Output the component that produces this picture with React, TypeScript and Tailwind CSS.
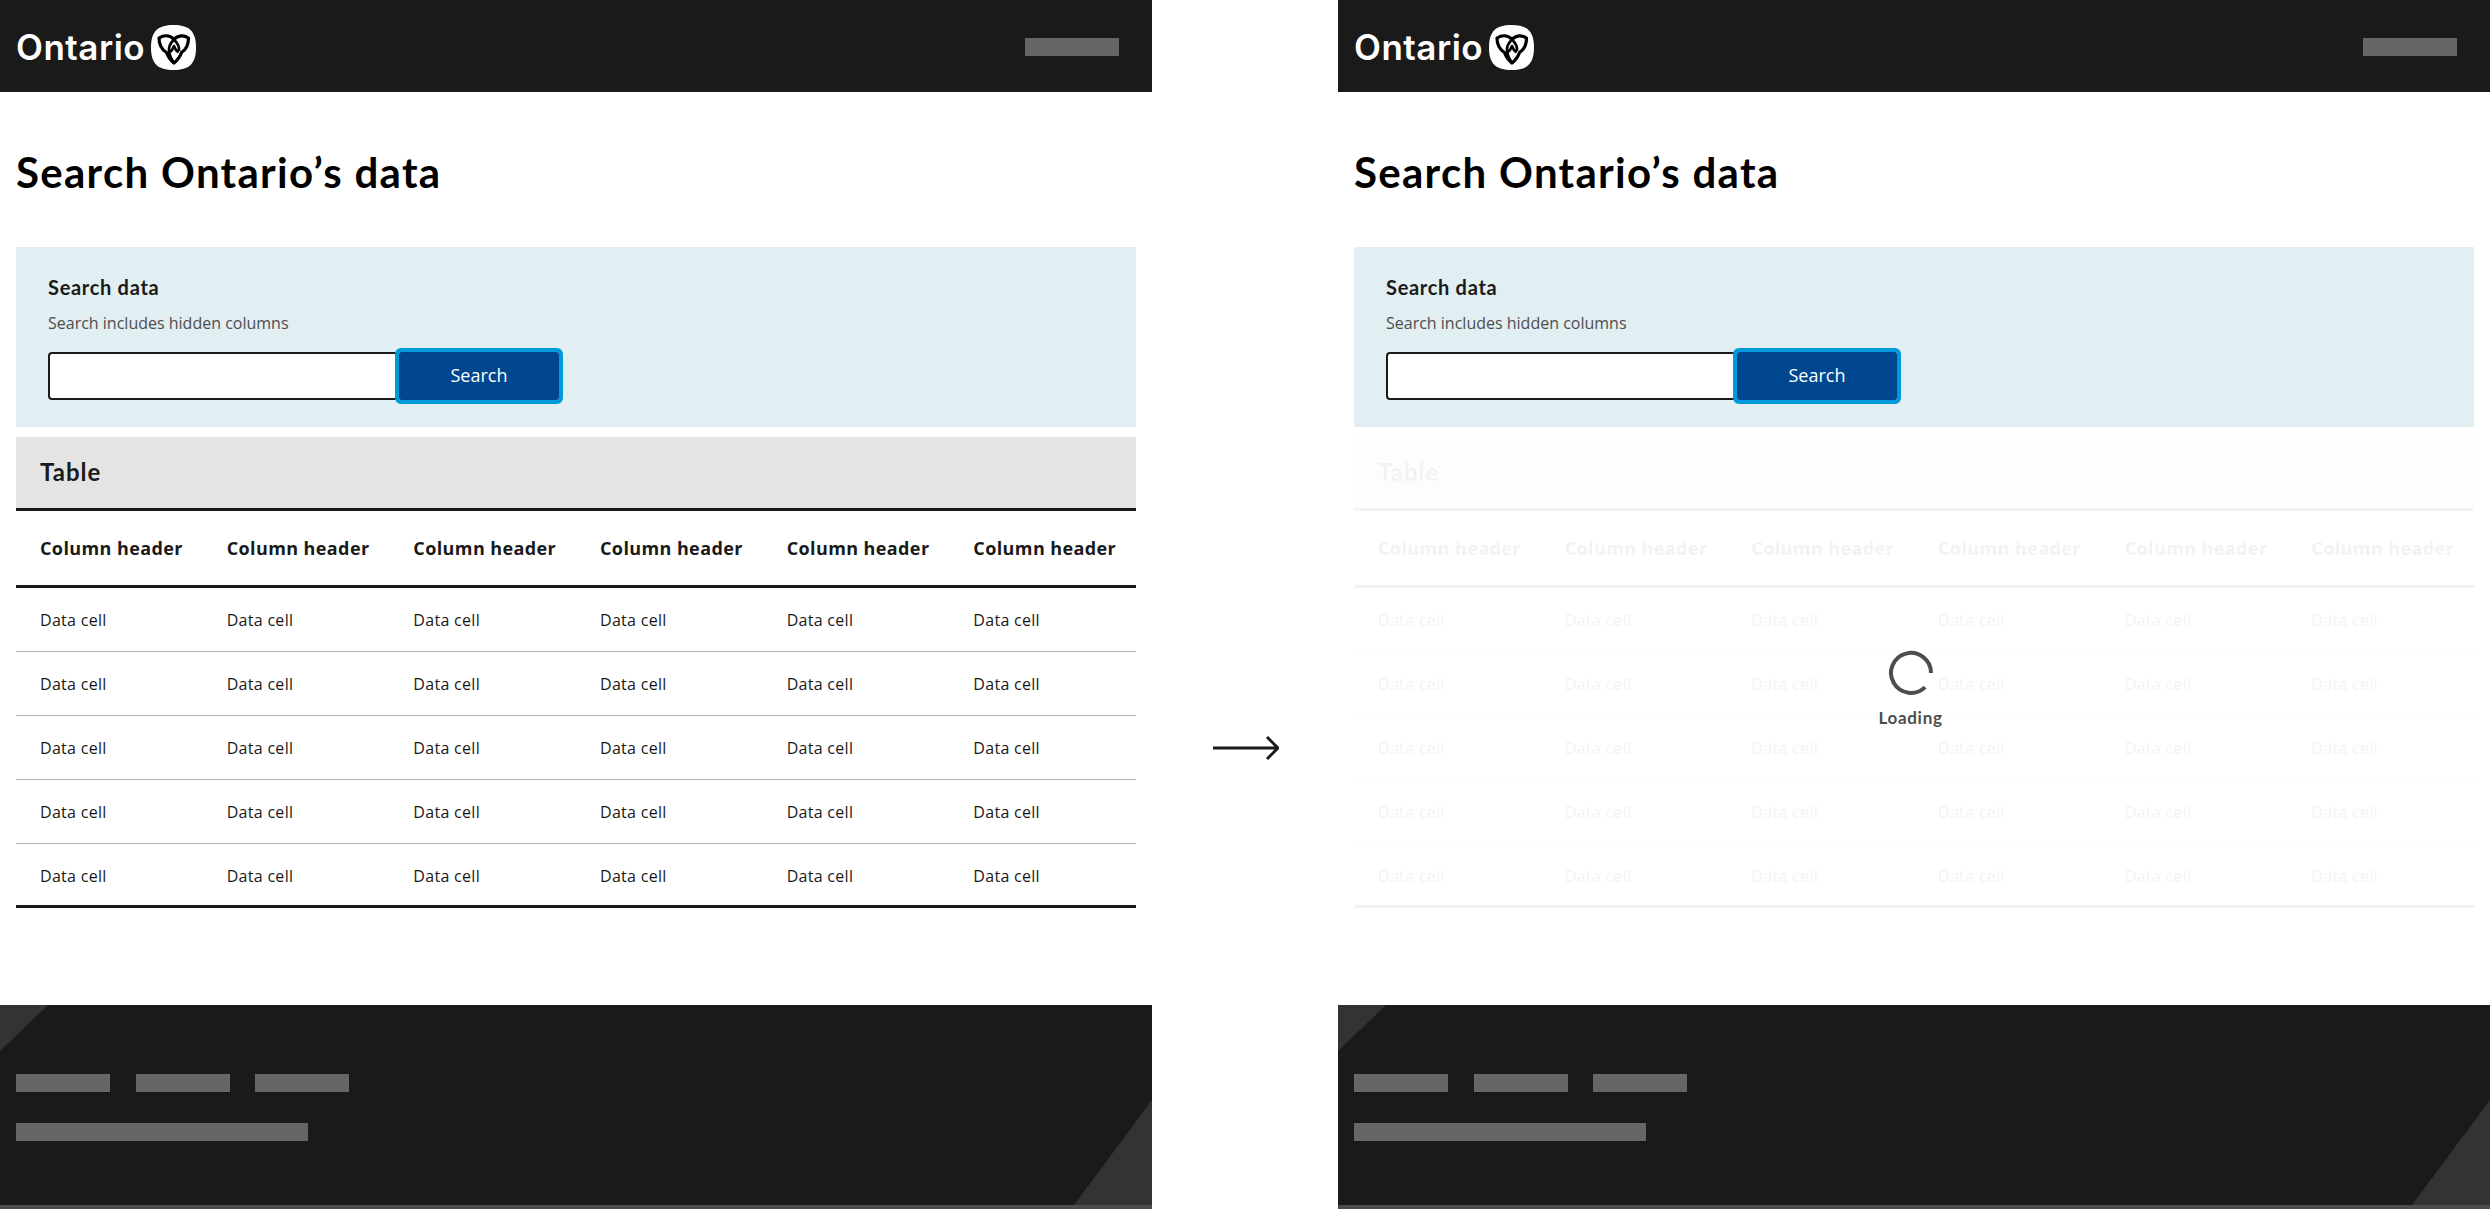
import * as React from 'react';

const COLUMNS = [1, 2, 3, 4, 5, 6];
const ROWS = [1, 2, 3, 4, 5];

function OntarioLogo() {
  return (
    <div className="flex items-center gap-[6px] pt-[2px]">
      <span className="font-['Inter',sans-serif] text-[35px] leading-[40px] font-semibold tracking-[0.5px] text-white">
        Ontario
      </span>
      <svg width="45" height="45" viewBox="0 0 45 45" className="shrink-0">
        <path d="M22.5 0C38 0 45 6 45 22.5S38 45 22.5 45 0 39 0 22.5 7 0 22.5 0Z" fill="#fff" />
        <g fill="none" stroke="#000" strokeLinejoin="round">
          <path
            strokeWidth="3.2"
            d="M8 13C13 10 19 10 23 14.5 27 10 33 10 37.5 13 37.5 20 34.5 25 30.5 27.5 29 32 26 35.5 23 38 20 35.5 17 32 15.5 27.5 11.5 25 8 20 8 13Z"
          />
          <path
            strokeWidth="2.6"
            d="M23 14.5C19.5 18 17.5 22 18 26 18.5 31 21 35 23 38M23 14.5C26.5 18 28.5 22 28 26M18.5 27.5C20.5 26 22 24 23 21 24 24 25.5 26 27.5 27.5"
          />
        </g>
      </svg>
    </div>
  );
}

function Footer() {
  return (
    <footer className="relative h-[204px] shrink-0 border-b-4 border-[#4d4d4d] bg-[#1a1a1a] px-4 pt-[69px]">
      <svg className="absolute top-0 left-0" width="48" height="46" viewBox="0 0 48 46">
        <path d="M0 0H48L0 46Z" fill="#333" />
      </svg>
      <svg className="absolute right-0 bottom-0" width="78" height="105" viewBox="0 0 78 105">
        <path d="M78 0V105H0Z" fill="#333" />
      </svg>
      <div className="flex">
        <div className="h-[18px] w-[94px] bg-[#666]" />
        <div className="ml-[26px] h-[18px] w-[94px] bg-[#666]" />
        <div className="ml-[25px] h-[18px] w-[94px] bg-[#666]" />
      </div>
      <div className="mt-[31px] h-[18px] w-[292px] bg-[#666]" />
    </footer>
  );
}

function DataTable() {
  return (
    <div>
      <div className="flex h-[71px] items-center bg-[#e4e4e4] px-6">
        <h2 className="mb-[1px] font-['Lato',sans-serif] text-[24px] leading-8 font-bold tracking-[1px] text-[#1a1a1a]">
          Table
        </h2>
      </div>
      <table className="w-full table-fixed border-separate border-spacing-0 border-t-[3px] border-[#1a1a1a] font-['Open_Sans',sans-serif] text-[#1a1a1a]">
        <thead>
          <tr>
            {COLUMNS.map((col) => (
              <th
                key={col}
                className="h-[77px] border-b-[3px] border-[#1a1a1a] pt-[1px] pl-6 text-left text-[18px] font-bold tracking-[0.4px]"
              >
                Column header
              </th>
            ))}
          </tr>
        </thead>
        <tbody>
          {ROWS.map((row) => (
            <tr key={row}>
              {COLUMNS.map((col) => (
                <td
                  key={col}
                  className={
                    row === ROWS.length
                      ? 'h-[64px] border-b-[3px] border-[#1a1a1a] pt-[2px] pl-6 text-base tracking-[0.3px]'
                      : 'h-[64px] border-b border-[#b3b3b3] pl-6 text-base tracking-[0.3px]'
                  }
                >
                  Data cell
                </td>
              ))}
            </tr>
          ))}
        </tbody>
      </table>
    </div>
  );
}

function Page({ loading }: { loading?: boolean }) {
  return (
    <div className="relative flex h-full w-[1152px] shrink-0 flex-col">
      <header className="flex h-[92px] shrink-0 items-center justify-between bg-[#1a1a1a] pr-[33px] pl-4">
        <OntarioLogo />
        <div className="mt-[2px] h-[18px] w-[94px] bg-[#666]" />
      </header>
      <main className="flex-1 px-4">
        <h1 className="mt-[56px] mb-[51px] font-['Lato',sans-serif] text-[42px] leading-[48px] font-bold tracking-[1.3px] text-black">
          Search Ontario’s data
        </h1>
        <section className="mb-[10px] h-[180px] bg-[#e1eef2] px-8 pt-7">
          <p className="font-['Lato',sans-serif] text-[20px] leading-6 font-bold tracking-[0.7px] text-[#1a1a1a]">
            Search data
          </p>
          <p className="mt-3 font-['Open_Sans',sans-serif] text-base leading-6 text-[#4d4d4d]">
            Search includes hidden columns
          </p>
          <div className="mt-[17px] flex">
            <input className="h-12 w-[351px] rounded-l-[4px] border-2 border-[#1a1a1a] bg-white" />
            <button className="h-12 w-40 rounded-[2px] bg-[#00478f] pb-[1px] font-['Open_Sans',sans-serif] text-[18px] text-white outline-4 outline-[#009adb]">
              Search
            </button>
          </div>
        </section>
        <div className={loading ? 'opacity-5' : ''}>
          <DataTable />
        </div>
      </main>
      <Footer />
      {loading && (
        <div className="absolute top-[650px] left-0 flex w-full flex-col items-center pr-[7px]">
          <svg width="46" height="46" viewBox="0 0 46 46">
            <path
              d="M43 23A20 20 0 1 0 37.1 37.1"
              fill="none"
              stroke="#4d4d4d"
              strokeWidth="4"
            />
          </svg>
          <span className="mt-[10px] font-['Lato',sans-serif] text-[17px] leading-6 font-bold tracking-[0.7px] text-[#4d4d4d]">
            Loading
          </span>
        </div>
      )}
    </div>
  );
}

export default function App() {
  return (
    <div className="flex h-[1209px] w-[2490px] bg-white">
      <Page />
      <div className="flex flex-1 items-center justify-center pt-[287px]">
        <svg width="68" height="24" viewBox="0 0 68 24">
          <path d="M2 12H67M56 1L67 12 56 23" fill="none" stroke="#1a1a1a" strokeWidth="3" />
        </svg>
      </div>
      <Page loading />
    </div>
  );
}
